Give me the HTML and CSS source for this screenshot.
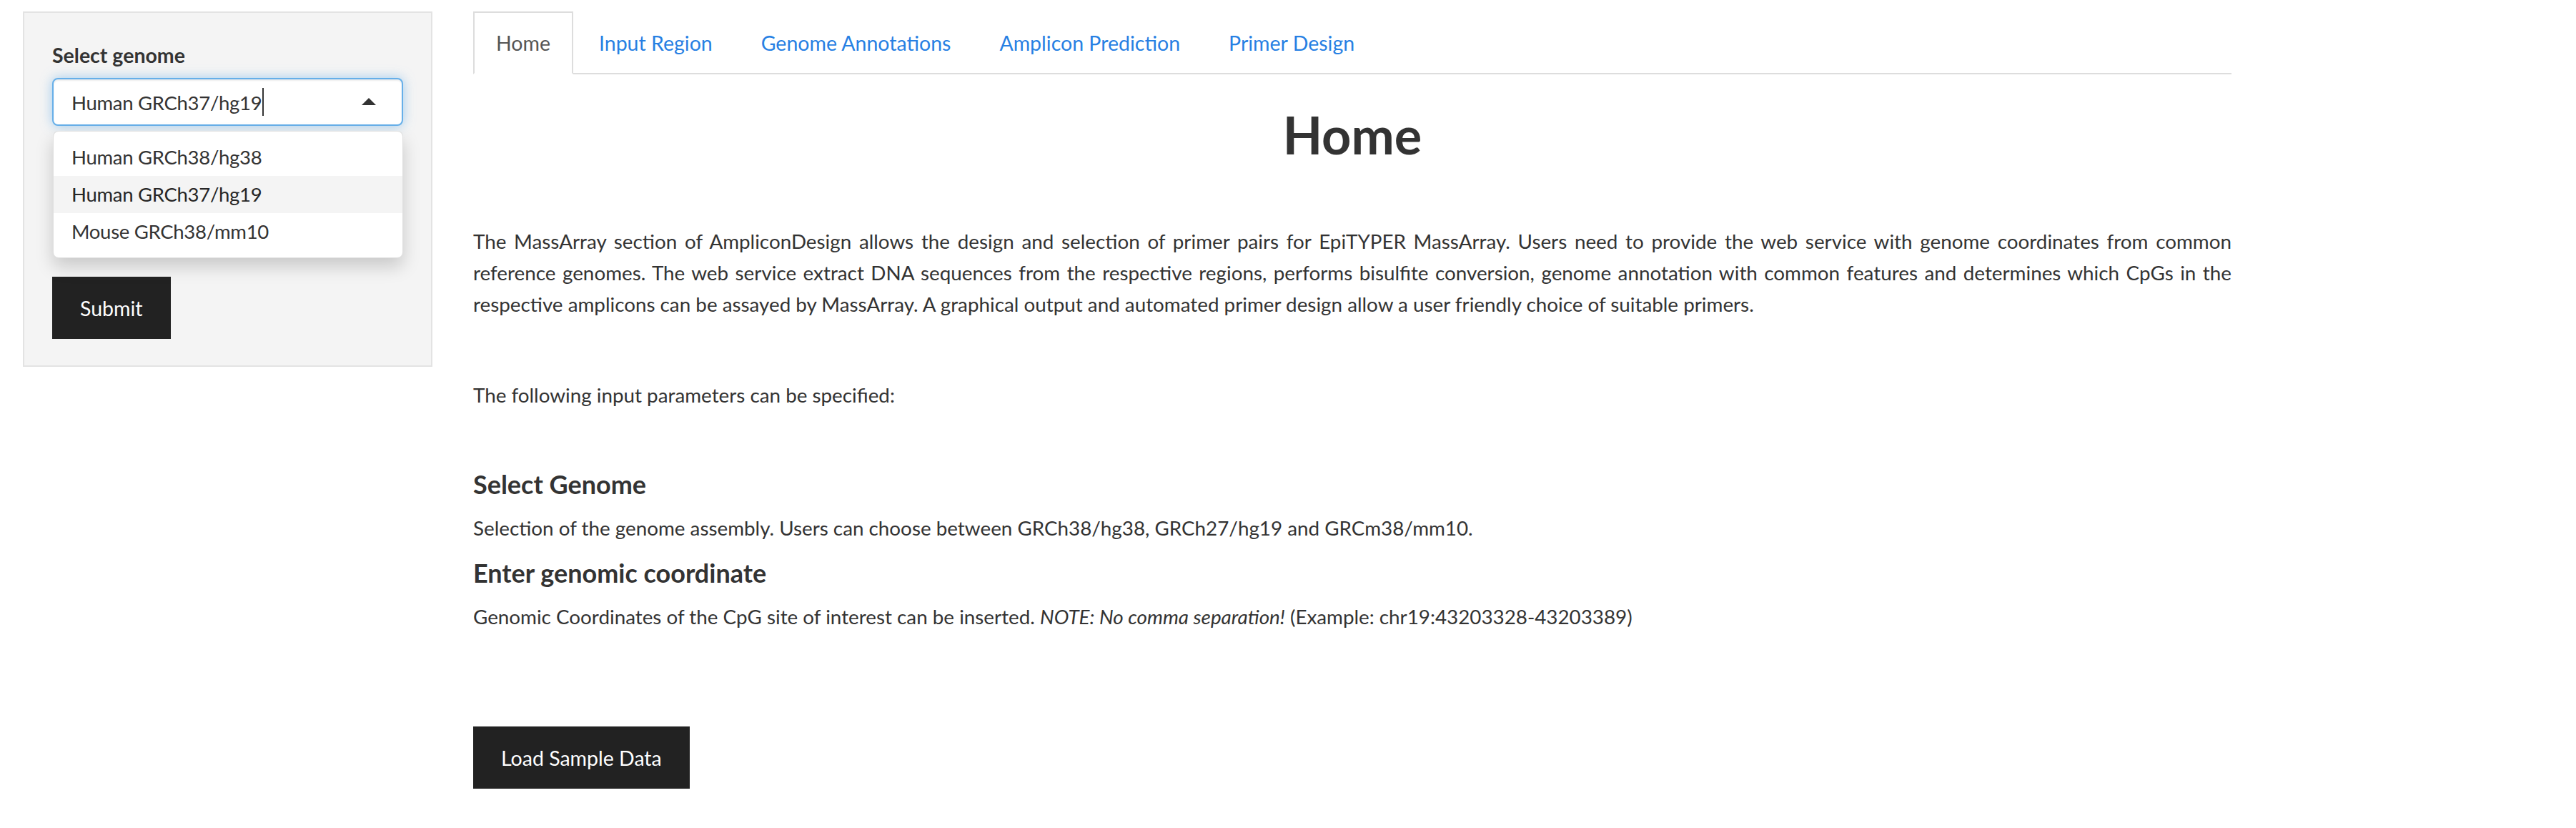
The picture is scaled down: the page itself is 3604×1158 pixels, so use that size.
FILE: index.html
```html
<!DOCTYPE html>
<html lang="en">
<head>
<meta charset="utf-8">
<title>AmpliconDesign - MassArray</title>
<link rel="stylesheet" href="styles.css">
</head>
<body>
<div class="page">
  <aside class="well">
    <div class="form-group">
      <label class="control-label">Select genome</label>
      <div class="selectize">
        <div class="select-input">
          <span class="item">Human GRCh37/hg19</span><span class="cursor"></span>
          <span class="caret"></span>
        </div>
        <div class="dropdown">
          <div class="option">Human GRCh38/hg38</div>
          <div class="option active">Human GRCh37/hg19</div>
          <div class="option">Mouse GRCh38/mm10</div>
        </div>
      </div>
    </div>
    <button class="btn">Submit</button>
  </aside>
  <main class="main">
    <ul class="nav-tabs">
      <li class="tab active"><a>Home</a></li>
      <li class="tab"><a>Input Region</a></li>
      <li class="tab"><a>Genome Annotations</a></li>
      <li class="tab"><a>Amplicon Prediction</a></li>
      <li class="tab"><a>Primer Design</a></li>
    </ul>
    <div class="tab-content">
      <h1 class="title">Home</h1>
      <p class="intro">The MassArray section of AmpliconDesign allows the design and selection of primer pairs for EpiTYPER MassArray. Users need to provide the web service with genome coordinates from common reference genomes. The web service extract DNA sequences from the respective regions, performs bisulfite conversion, genome annotation with common features and determines which CpGs in the respective amplicons can be assayed by MassArray. A graphical output and automated primer design allow a user friendly choice of suitable primers.</p>
      <p class="params">The following input parameters can be specified:</p>
      <h4 class="param-title first">Select Genome</h4>
      <p class="param-text">Selection of the genome assembly. Users can choose between GRCh38/hg38, GRCh27/hg19 and GRCm38/mm10.</p>
      <h4 class="param-title">Enter genomic coordinate</h4>
      <p class="param-text">Genomic Coordinates of the CpG site of interest can be inserted. <em>NOTE: No comma separation!</em> (Example: chr19:43203328-43203389)</p>
      <button class="btn load">Load Sample Data</button>
    </div>
  </main>
</div>
</body>
</html>
```
FILE: styles.css
```css
* { box-sizing: border-box; }

html, body {
  margin: 0;
  padding: 0;
  background: #fff;
}

body {
  font-family: Lato, "Noto Sans", sans-serif;
  font-size: 28.5px;
  line-height: 44px;
  color: #333;
}

.page {
  display: flex;
  align-items: flex-start;
  padding: 16px 0 0 32px;
}

/* ---------- sidebar ---------- */
.well {
  width: 573px;
  flex: none;
  background: #f4f4f4;
  border: 2px solid #e3e3e3;
  padding: 37px 39px 37px 39px;
}

.form-group {
  margin-bottom: 0;
}

.control-label {
  display: block;
  font-weight: 700;
  margin-bottom: 10px;
}

.selectize {
  position: relative;
  height: 278px;
  font-size: 27.5px;
  letter-spacing: -0.3px;
}

.select-input {
  position: relative;
  display: flex;
  align-items: center;
  height: 67px;
  width: 491px;
  padding: 0 25px;
  background: #fff;
  border: 2px solid #66afe9;
  border-radius: 8px;
  box-shadow: inset 0 2px 2px rgba(0, 0, 0, .075), 0 0 16px rgba(102, 175, 233, .6);
  color: #333;
}

.item {
  line-height: 44px;
  padding-top: 3px;
}

.cursor {
  display: inline-block;
  width: 2px;
  height: 39px;
  background: #333;
  margin-left: 1px;
}

.caret {
  position: absolute;
  right: 36px;
  top: 26px;
  width: 0;
  height: 0;
  border-style: solid;
  border-width: 0 10px 10px 10px;
  border-color: transparent transparent #333 transparent;
}

.dropdown {
  position: absolute;
  top: 74px;
  left: 1px;
  width: 490px;
  z-index: 10;
  background: #fff;
  border: 1px solid rgba(0, 0, 0, .12);
  border-radius: 8px;
  box-shadow: 0 12px 25px rgba(0, 0, 0, .175);
  padding: 10px 0;
}

.option {
  height: 52px;
  line-height: 52px;
  padding: 0 25px;
  color: #333;
}

.option.active {
  background: #f4f4f4;
  color: #262626;
}

.btn {
  display: inline-block;
  font-family: inherit;
  font-size: 28.5px;
  line-height: 44px;
  color: #fff;
  background: #222;
  border: 0;
  border-radius: 0;
  padding: 21.5px 39px;
  margin: 0;
  cursor: pointer;
}

/* ---------- main ---------- */
.main {
  width: 2460px;
  flex: none;
  margin-left: 57px;
}

.nav-tabs {
  display: flex;
  list-style: none;
  margin: 0;
  padding: 0;
  border-bottom: 2px solid #ddd;
}

.tab {
  margin-right: 4px;
  margin-bottom: -2px;
}

.tab a {
  display: block;
  padding: 20px 30px 20px 30px;
  border: 2px solid transparent;
  line-height: 44px;
  color: #2780e3;
  cursor: pointer;
}

.tab.active a {
  color: #555;
  background: #fff;
  border-color: #ddd #ddd transparent #ddd;
}

.tab-content {
  padding: 0;
}

.title {
  font-size: 72px;
  line-height: 79px;
  font-weight: 700;
  text-align: center;
  margin: 45px 0 0 0;
  color: #333;
}

.intro,
.params,
.param-text {
  font-size: 27.8px;
}

.intro {
  margin: 88px 0 0 0;
  text-align: justify;
}

.params {
  margin: 83px 0 0 0;
}

.param-title {
  font-size: 36px;
  line-height: 40px;
  font-weight: 700;
  margin: 20px 0 20px 0;
}

.param-title.first {
  margin-top: 82px;
}

.param-text {
  margin: 0;
}

.param-text em {
  font-style: italic;
}

.load {
  margin-top: 131px;
}
```
